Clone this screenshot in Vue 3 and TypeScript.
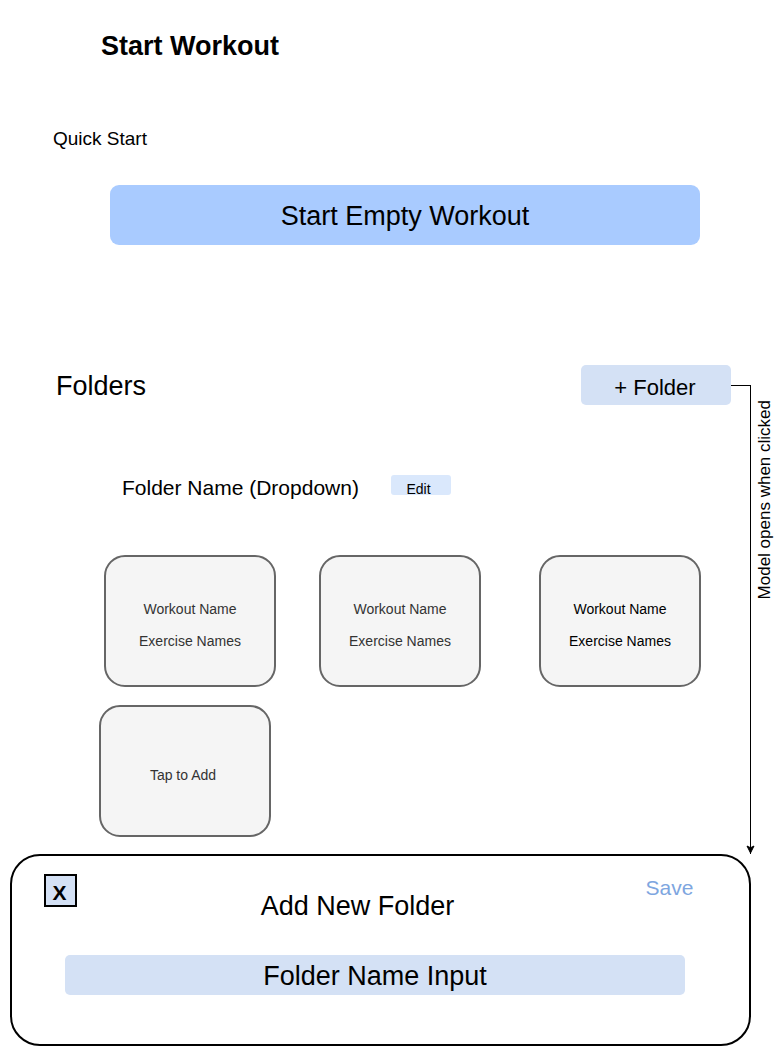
<script setup lang="ts">
import { ref } from 'vue'

interface Workout {
  id: number
  name: string
  exercises: string
  active: boolean
}

const workouts: Workout[] = [
  { id: 1, name: 'Workout Name', exercises: 'Exercise Names', active: false },
  { id: 2, name: 'Workout Name', exercises: 'Exercise Names', active: false },
  { id: 3, name: 'Workout Name', exercises: 'Exercise Names', active: true },
]

const folders: string[] = ['Folder Name (Dropdown)']
const selectedFolder = ref<string>(folders[0])
const newFolderName = ref<string>('')
</script>

<template>
  <main class="page">
    <h1 class="page-title">Start Workout</h1>

    <section class="quick">
      <h2 class="quick-title">Quick Start</h2>
      <button class="start" type="button">Start Empty Workout</button>
    </section>

    <section class="folders">
      <div class="folders-main">
        <header class="folders-head">
          <h2 class="folders-title">Folders</h2>
          <button class="add-folder" type="button">+ Folder</button>
        </header>

        <div class="folder-bar">
          <select v-model="selectedFolder" class="folder-select" aria-label="Folder">
            <option v-for="folder in folders" :key="folder" :value="folder">{{ folder }}</option>
          </select>
          <button class="edit" type="button">Edit</button>
        </div>

        <div class="cards">
          <article
            v-for="workout in workouts"
            :key="workout.id"
            class="card"
            :class="{ active: workout.active }"
          >
            <h3 class="card-line">{{ workout.name }}</h3>
            <p class="card-line">{{ workout.exercises }}</p>
          </article>
        </div>
        <div class="cards cards-add">
          <button class="card" type="button">Tap to Add</button>
        </div>
      </div>

      <aside class="connector">
        <div class="connector-line">
          <svg class="arrow" width="9" height="9" viewBox="0 0 9 9" aria-hidden="true">
            <path d="M4.5 8 L1 1 L4.5 2.75 L8 1 Z" fill="#000" stroke="#000" />
          </svg>
        </div>
        <p class="connector-label">Model opens when clicked</p>
      </aside>
    </section>

    <section class="modal" role="dialog" aria-labelledby="modal-title">
      <header class="modal-head">
        <button class="close" type="button" aria-label="Close">X</button>
        <h2 id="modal-title" class="modal-title">Add New Folder</h2>
        <button class="save" type="button">Save</button>
      </header>
      <input
        v-model="newFolderName"
        class="name-input"
        type="text"
        aria-label="Folder name"
        placeholder="Folder Name Input"
      />
    </section>
  </main>
</template>

<style>
body {
  background: #fff;
}
</style>

<style scoped>
.page {
  font-family: "Liberation Sans", Arial, Helvetica, sans-serif;
  color: #000;
  padding-top: 30px;
}

.page *,
.page {
  box-sizing: border-box;
}

h1,
h2,
h3,
p {
  margin: 0;
  font-weight: 400;
}

button,
select,
input {
  font-family: inherit;
  color: inherit;
  border: 0;
  margin: 0;
  padding: 0;
}

button {
  cursor: pointer;
}

.page-title {
  margin-left: 101px;
  font-size: 27px;
  line-height: 32px;
  font-weight: 700;
}

.quick {
  padding: 65px 77px 0 53px;
}

.quick-title {
  font-size: 19px;
  line-height: 24px;
}

.start {
  display: block;
  width: calc(100% - 57px);
  height: 60px;
  margin: 34px 0 0 57px;
  padding-top: 2px;
  border-radius: 9px;
  background: #a9cbff;
  font-size: 27px;
}

.folders {
  display: flex;
  margin-top: 120px;
}

.folders-main {
  flex: 1;
  min-width: 0;
  padding-bottom: 17px;
}

.folders-head {
  display: flex;
  justify-content: space-between;
  align-items: center;
  padding-left: 56px;
}

.folders-title {
  padding-top: 2px;
  font-size: 27px;
  line-height: 32px;
}

.add-folder {
  width: 150px;
  height: 40px;
  padding: 6px 2px 0 0;
  border-radius: 5px;
  background: #d4e1f5;
  font-size: 22px;
}

.folder-bar {
  display: flex;
  align-items: flex-start;
  gap: 32px;
  margin: 70px 0 0 122px;
}

.folder-select {
  appearance: none;
  background: none;
  height: 24px;
  font-size: 21px;
}

.edit {
  width: 60px;
  height: 20px;
  padding: 6px 5px 0 0;
  border-radius: 3px;
  background: #dae8fc;
  font-size: 14px;
}

.cards {
  display: grid;
  grid-template-columns: 172fr 43fr 162fr 58fr 162fr;
  margin: 56px 30px 0 104px;
}

.cards-add {
  margin: 18px 35px 0 99px;
}

.card {
  display: flex;
  flex-direction: column;
  justify-content: center;
  align-items: center;
  gap: 16px;
  min-height: 132px;
  padding-top: 8px;
  border: 2px solid #666;
  border-radius: 21px;
  background: #f5f5f5;
  color: #333;
  font-size: 14px;
  line-height: 16px;
  text-align: center;
}

.card:nth-child(2) {
  grid-column: 3;
}

.card:nth-child(3) {
  grid-column: 5;
}

.card.active {
  color: #000;
}

.cards-add .card {
  padding-right: 4px;
}

.card-line {
  font-size: 14px;
}

.connector {
  display: flex;
  width: 46px;
  margin-top: 20px;
}

.connector-line {
  position: relative;
  width: 20px;
  border-top: 1px solid #000;
  border-right: 1px solid #000;
}

.arrow {
  position: absolute;
  right: -5px;
  bottom: 0;
}

.connector-label {
  margin: 15px 0 0 4px;
  align-self: flex-start;
  writing-mode: vertical-rl;
  transform: rotate(180deg);
  font-size: 17px;
  line-height: 20px;
  white-space: nowrap;
}

.modal {
  margin: 0 26px 0 10px;
  padding: 18px 48px 49px 32px;
  border: 2px solid #000;
  border-radius: 30px;
  background: #fff;
}

.modal-head {
  display: flex;
  align-items: flex-start;
}

.close {
  width: 33px;
  height: 33px;
  padding: 4px 2px 0 0;
  border: 2px solid #000;
  background: #d4e1f5;
  font-size: 21px;
  font-weight: 700;
  line-height: 24px;
}

.modal-title {
  flex: 1;
  padding-top: 16px;
  font-size: 27px;
  line-height: 32px;
  text-align: center;
}

.save {
  width: 63px;
  padding-top: 2px;
  background: none;
  color: #7ea6e0;
  font-size: 21px;
  line-height: 24px;
}

.name-input {
  display: block;
  width: calc(100% - 37px);
  height: 40px;
  margin: 33px 0 0 21px;
  padding-top: 2px;
  border-radius: 5px;
  background: #d4e1f5;
  font-size: 27px;
  text-align: center;
}

.name-input::placeholder {
  color: #000;
  opacity: 1;
}
</style>
